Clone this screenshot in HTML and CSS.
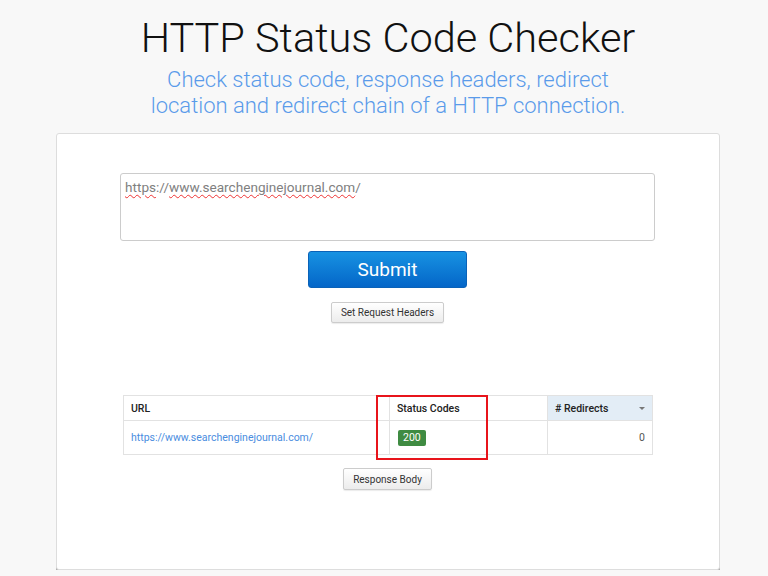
FILE: index.html
```html
<!DOCTYPE html>
<html lang="en">
<head>
  <meta charset="UTF-8">
  <meta name="viewport" content="width=device-width, initial-scale=1.0">
  <title>HTTP Status Code Checker</title>
  <link rel="stylesheet" href="styles.css">
</head>
<body>
  <div class="header">
    <h1>HTTP Status Code Checker</h1>
    <p class="subtitle">Check status code, response headers, redirect<br>location and redirect chain of a HTTP connection.</p>
  </div>

  <div class="card">
    <div class="url-input"><span class="typo">https</span>://<span class="typo">www.searchenginejournal.com</span>/</div>

    <div class="actions">
      <button class="submit-btn">Submit</button>
      <button class="small-btn">Set Request Headers</button>
    </div>

    <div class="results">
      <table class="results-table">
        <thead>
          <tr>
            <th class="col-url">URL</th>
            <th class="col-status">Status Codes</th>
            <th class="col-redirects sorted">
              <div class="sort-head"># Redirects <span class="caret"></span></div>
            </th>
          </tr>
        </thead>
        <tbody>
          <tr>
            <td><a href="#">https://www.searchenginejournal.com/</a></td>
            <td><span class="badge">200</span></td>
            <td class="num">0</td>
          </tr>
        </tbody>
      </table>
      <div class="highlight"></div>
    </div>

    <div class="actions">
      <button class="small-btn body-btn">Response Body</button>
    </div>
  </div>
</body>
</html>
```

FILE: styles.css
```css
body {
  margin: 0;
  background-color: #f8f8f8;
  font-family: Roboto, "Liberation Sans", sans-serif;
  color: #222;
}
.header {
  text-align: center;
  padding: 13px 0 0 8px;
}
h1 {
  margin: 0;
  font-size: 41.5px;
  font-weight: 300;
  line-height: 50px;
  color: #111;
}
.subtitle {
  margin: 4px 0 0;
  font-size: 22px;
  font-weight: 300;
  line-height: 26px;
  color: #5a9bea;
}
.card {
  margin: 14px 48px 0 56px;
  height: 396px;
  background-color: #fff;
  border: 1px solid #ddd;
  border-radius: 3px;
  box-shadow: 0 2px 0 #b0b0b0;
  padding: 39px 64px 0 63px;
}
.url-input {
  height: 58px;
  border: 1px solid #ccc;
  border-radius: 3px;
  padding: 3px 4px 5px;
  font-size: 13.6px;
  line-height: 20px;
  color: #808080;
}
.typo {
  text-decoration: underline wavy #e33;
  text-decoration-thickness: 1px;
  text-underline-offset: 2px;
}
.actions {
  display: flex;
  flex-direction: column;
  align-items: center;
}
.submit-btn {
  margin-top: 10px;
  width: 159px;
  height: 37px;
  border: 1px solid #0a62b8;
  border-radius: 3px;
  background: linear-gradient(#1792e2, #0466c8);
  color: #fff;
  font-family: Roboto, "Liberation Sans", sans-serif;
  font-size: 19px;
  cursor: pointer;
}
.small-btn {
  margin-top: 14px;
  height: 21px;
  padding: 0 9px;
  border: 1px solid #ccc;
  border-radius: 2px;
  background: linear-gradient(#fff, #ececec);
  box-shadow: 0 1px 1px rgba(0, 0, 0, 0.08);
  color: #333;
  font-family: Roboto, "Liberation Sans", sans-serif;
  font-size: 10px;
  cursor: pointer;
}
.body-btn {
  margin-top: 13px;
  height: 22px;
  padding: 0 9px;
}
.results {
  position: relative;
  margin: 72px 2px 0 3px;
}
.results-table {
  width: 100%;
  border-collapse: collapse;
  font-size: 10.5px;
}
.results-table th,
.results-table td {
  border: 1px solid #e2e2e2;
  text-align: left;
  padding: 0 7px;
}
.results-table th {
  height: 24px;
  font-weight: 500;
  color: #222;
}
.results-table td {
  height: 33px;
  color: #555;
}
.col-url {
  width: 251px;
}
.col-status {
  width: 143px;
}
.sorted {
  background-color: #e3edf6;
}
.sort-head {
  display: flex;
  align-items: center;
  justify-content: space-between;
}
.caret {
  width: 0;
  height: 0;
  border-left: 3px solid transparent;
  border-right: 3px solid transparent;
  border-top: 3px solid #777;
}
.results-table a {
  color: #4a8de0;
  text-decoration: none;
}
.badge {
  display: inline-block;
  background-color: #3f8b42;
  color: #fff;
  font-size: 10.5px;
  line-height: 16px;
  padding: 0 5px;
  border-radius: 2px;
  margin-left: 1px;
}
.num {
  text-align: right !important;
}
.highlight {
  position: absolute;
  left: 253px;
  top: 0;
  width: 108px;
  height: 61px;
  border: 2px solid #e8141b;
}
```
